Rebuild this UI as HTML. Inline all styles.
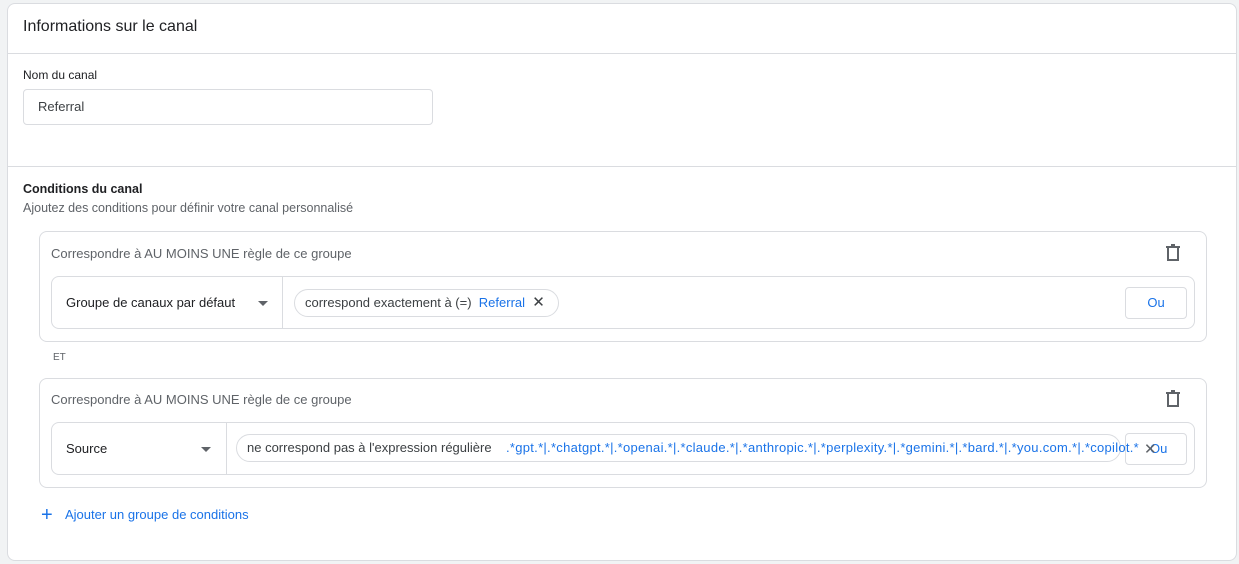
<!DOCTYPE html>
<html><head><meta charset="utf-8"><style>
*{box-sizing:border-box;margin:0;padding:0}
body{width:1239px;height:564px;background:#f1f3f4;font-family:"Liberation Sans",Arial,sans-serif;color:#202124;position:relative;overflow:hidden}
.a{position:absolute}
.card{left:7px;top:3px;width:1230px;height:558px;background:#fff;border:1px solid #dadce0;border-radius:8px}
.hr{height:1px;background:#dadce0;left:8px;width:1228px}
.box{border:1px solid #dadce0;border-radius:8px;background:#fff}
.t13{font-size:13px}
.pill{border:1px solid #dadce0;border-radius:14px;height:28px;font-size:13px;line-height:26px;padding-left:10px;white-space:nowrap;color:#3c4043}
.blue{color:#1a73e8}
.btn{border:1px solid #dadce0;border-radius:4px;width:62px;height:32px;font-size:13px;color:#1a73e8;text-align:center;line-height:30px}
.caret{width:0;height:0;border-left:5px solid transparent;border-right:5px solid transparent;border-top:5px solid #5f6368}
</style></head><body>
<div class="a card"></div>
<div class="a" style="left:23px;top:18px;font-size:16px;color:#202124">Informations sur le canal</div>
<div class="a hr" style="top:53px"></div>
<div class="a" style="left:23px;top:68px;font-size:12px">Nom du canal</div>
<div class="a" style="left:23px;top:89px;width:410px;height:36px;border:1px solid #dadce0;border-radius:4px;font-size:13px;line-height:34px;padding-left:14px;color:#3c4043">Referral</div>
<div class="a hr" style="top:166px"></div>
<div class="a" style="left:23px;top:182px;font-size:12.5px;font-weight:bold">Conditions du canal</div>
<div class="a" style="left:23px;top:201px;font-size:12.5px;color:#5f6368">Ajoutez des conditions pour définir votre canal personnalisé</div>

<div class="a box" style="left:39px;top:231px;width:1168px;height:111px"></div>
<div class="a t13" style="left:51px;top:246px;color:#5f6368">Correspondre à AU MOINS UNE règle de ce groupe</div>
<svg class="a" style="left:1165px;top:244px" width="16" height="18" viewBox="0 0 16 18"><path d="M1 3h14M6 1h4M3 3v13h10V3" fill="none" stroke="#5f6368" stroke-width="2"/></svg>
<div class="a box" style="left:51px;top:276px;width:1144px;height:53px"></div>
<div class="a" style="left:282px;top:277px;width:1px;height:51px;background:#dadce0"></div>
<div class="a t13" style="left:66px;top:295px">Groupe de canaux par défaut</div>
<div class="a caret" style="left:258px;top:301px"></div>
<div class="a pill" style="left:294px;top:289px;width:265px">correspond exactement à (=) &nbsp;<span class="blue">Referral</span> &nbsp;<span style="font-size:15px">✕</span></div>
<div class="a btn" style="left:1125px;top:287px">Ou</div>

<div class="a" style="left:53px;top:352px;font-size:10px;color:#5f6368">ET</div>

<div class="a box" style="left:39px;top:378px;width:1168px;height:110px"></div>
<div class="a t13" style="left:51px;top:392px;color:#5f6368">Correspondre à AU MOINS UNE règle de ce groupe</div>
<svg class="a" style="left:1165px;top:390px" width="16" height="18" viewBox="0 0 16 18"><path d="M1 3h14M6 1h4M3 3v13h10V3" fill="none" stroke="#5f6368" stroke-width="2"/></svg>
<div class="a box" style="left:51px;top:422px;width:1144px;height:53px"></div>
<div class="a" style="left:226px;top:423px;width:1px;height:51px;background:#dadce0"></div>
<div class="a t13" style="left:66px;top:441px">Source</div>
<div class="a caret" style="left:201px;top:447px"></div>
<div class="a btn" style="left:1125px;top:433px;text-align:left;padding-left:24px">Ou</div>
<div class="a pill" style="left:236px;top:434px;width:885px;overflow:visible">ne correspond pas à l'expression régulière &nbsp;&nbsp;&nbsp;<span class="blue" style="letter-spacing:0.28px">.*gpt.*|.*chatgpt.*|.*openai.*|.*claude.*|.*anthropic.*|.*perplexity.*|.*gemini.*|.*bard.*|.*you.com.*|.*copilot.*</span></div>
<div class="a" style="left:1144px;top:440px;font-size:15px;color:#5f6368">✕</div>

<div class="a" style="left:41px;top:505px;font-size:20px;color:#1a73e8;line-height:20px">+</div>
<div class="a t13 blue" style="left:65px;top:507px">Ajouter un groupe de conditions</div>
</body></html>
